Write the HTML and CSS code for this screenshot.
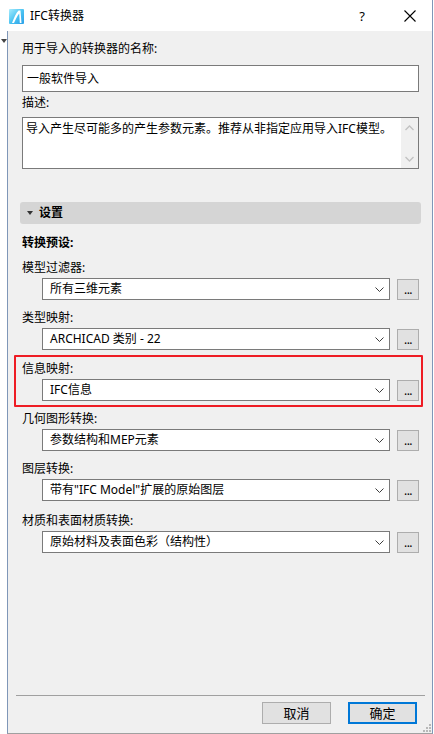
FILE: index.html
```html
<!DOCTYPE html>
<html lang="zh">
<head>
<meta charset="utf-8">
<title>IFC转换器</title>
<link rel="stylesheet" href="styles.css">
</head>
<body>
<div class="window">
  <div class="titlebar">
    <svg class="app-icon" width="15" height="15" viewBox="0 0 15 15">
      <defs>
        <linearGradient id="g" x1="0" y1="0" x2="1" y2="1">
          <stop offset="0" stop-color="#a8ecfd"/>
          <stop offset="0.5" stop-color="#4cc4f2"/>
          <stop offset="1" stop-color="#2a9fe8"/>
        </linearGradient>
      </defs>
      <rect x="0" y="0" width="15" height="15" rx="1" fill="url(#g)"/>
      <path d="M3 14 C5 9 7 4 9.5 1.5 L11.5 1.5 L12.5 14 L10.8 14 L10.2 4.5 C8.2 7 6.5 10.5 5 14 Z" fill="#ffffff"/>
    </svg>
    <span class="title">IFC转换器</span>
    <span class="help">?</span>
    <svg class="close" width="12" height="12" viewBox="0 0 12 12">
      <path d="M0.5 0.5 L11.5 11.5 M11.5 0.5 L0.5 11.5" stroke="#000" stroke-width="1.1" fill="none"/>
    </svg>
  </div>
  <div class="main">
    <div class="gutter"><span class="gutter-arrow"></span></div>
    <div class="panel">
      <div class="label first">用于导入的转换器的名称:</div>
      <div class="input">一般软件导入</div>
      <div class="label desc-label">描述:</div>
      <div class="textarea">
        <div class="textarea-text">导入产生尽可能多的产生参数元素。推荐从非指定应用导入IFC模型。</div>
        <div class="scrollbar">
          <svg width="9" height="6" viewBox="0 0 9 6"><polyline points="0.5,5 4.5,1 8.5,5" stroke="#c2c2c2" stroke-width="1.3" fill="none"/></svg>
          <svg width="9" height="6" viewBox="0 0 9 6"><polyline points="0.5,1 4.5,5 8.5,1" stroke="#c2c2c2" stroke-width="1.3" fill="none"/></svg>
        </div>
      </div>

      <div class="section-head"><span class="tri"></span><span class="section-title">设置</span></div>
      <div class="label bold preset">转换预设:</div>

      <div class="row r1">
        <div class="label">模型过滤器:</div>
        <div class="combo-line">
          <div class="combo"><span>所有三维元素</span><svg class="chev" width="9" height="5" viewBox="0 0 9 5"><polyline points="0.5,0.5 4.5,4.5 8.5,0.5" stroke="#3c3c3c" stroke-width="1" fill="none"/></svg></div>
          <div class="dots">...</div>
        </div>
      </div>
      <div class="row r2">
        <div class="label">类型映射:</div>
        <div class="combo-line">
          <div class="combo"><span>ARCHICAD 类别 - 22</span><svg class="chev" width="9" height="5" viewBox="0 0 9 5"><polyline points="0.5,0.5 4.5,4.5 8.5,0.5" stroke="#3c3c3c" stroke-width="1" fill="none"/></svg></div>
          <div class="dots">...</div>
        </div>
      </div>
      <div class="row r3">
        <div class="label">信息映射:</div>
        <div class="combo-line">
          <div class="combo"><span>IFC信息</span><svg class="chev" width="9" height="5" viewBox="0 0 9 5"><polyline points="0.5,0.5 4.5,4.5 8.5,0.5" stroke="#3c3c3c" stroke-width="1" fill="none"/></svg></div>
          <div class="dots">...</div>
        </div>
      </div>
      <div class="row r4">
        <div class="label">几何图形转换:</div>
        <div class="combo-line">
          <div class="combo"><span>参数结构和MEP元素</span><svg class="chev" width="9" height="5" viewBox="0 0 9 5"><polyline points="0.5,0.5 4.5,4.5 8.5,0.5" stroke="#3c3c3c" stroke-width="1" fill="none"/></svg></div>
          <div class="dots">...</div>
        </div>
      </div>
      <div class="row r5">
        <div class="label">图层转换:</div>
        <div class="combo-line">
          <div class="combo"><span>带有"IFC Model"扩展的原始图层</span><svg class="chev" width="9" height="5" viewBox="0 0 9 5"><polyline points="0.5,0.5 4.5,4.5 8.5,0.5" stroke="#3c3c3c" stroke-width="1" fill="none"/></svg></div>
          <div class="dots">...</div>
        </div>
      </div>
      <div class="row r6">
        <div class="label">材质和表面材质转换:</div>
        <div class="combo-line">
          <div class="combo"><span>原始材料及表面色彩（结构性）</span><svg class="chev" width="9" height="5" viewBox="0 0 9 5"><polyline points="0.5,0.5 4.5,4.5 8.5,0.5" stroke="#3c3c3c" stroke-width="1" fill="none"/></svg></div>
          <div class="dots">...</div>
        </div>
      </div>

      <div class="footer">
        <div class="separator"></div>
        <div class="buttons">
          <div class="btn">取消</div>
          <div class="btn default">确定</div>
        </div>
      </div>
      <svg class="grip" width="9" height="9" viewBox="0 0 9 9">
        <rect x="7" y="1" width="2" height="2" fill="#b8b8b8"/>
        <rect x="4" y="4" width="2" height="2" fill="#b8b8b8"/>
        <rect x="7" y="4" width="2" height="2" fill="#b8b8b8"/>
        <rect x="1" y="7" width="2" height="2" fill="#b8b8b8"/>
        <rect x="4" y="7" width="2" height="2" fill="#b8b8b8"/>
        <rect x="7" y="7" width="2" height="2" fill="#b8b8b8"/>
      </svg>
      <div class="highlight"></div>
    </div>
  </div>
</div>
</body>
</html>
```

FILE: styles.css
```css
* { box-sizing: border-box; }
html, body { margin: 0; padding: 0; }
body {
  font-family: "Noto Sans", "Noto Sans CJK SC", sans-serif;
  font-size: 12px;
  color: #000;
  background: #fff;
}
.window {
  width: 434px;
  height: 734px;
  background: #fff;
  display: flex;
  flex-direction: column;
  border-right: 1px solid #fff;
  position: relative;
}
.titlebar {
  height: 31px;
  display: flex;
  align-items: center;
  background: #fff;
  border-right: 1px solid #7f97b8;
}
.app-icon { margin-left: 9px; margin-top: 2px; }
.title { margin-left: 6px; font-size: 12px; line-height: 16px; margin-top: 1px; }
.help { margin-left: auto; font-size: 13px; line-height: 16px; margin-right: 39px; }
.close { margin-right: 16px; }
.main {
  flex: 1;
  display: flex;
}
.gutter {
  width: 7px;
  background: #fff;
  position: relative;
}
.gutter-arrow {
  position: absolute;
  left: 1px;
  top: 8px;
  width: 0; height: 0;
  border-left: 3px solid transparent;
  border-right: 3px solid transparent;
  border-top: 4px solid #444;
}
.panel {
  width: 426px;
  background: #f0f0f0;
  border-left: 1px solid #7f97b8;
  border-right: 1px solid #7f97b8;
  border-bottom: 1px solid #a0a0a0;
  padding-left: 14px;
  display: flex;
  flex-direction: column;
  position: relative;
}
.label { line-height: 16px; height: 16px; white-space: nowrap; }
.label.first { margin-top: 10px; }
.bold { font-weight: bold; }
.input {
  margin-top: 8px;
  width: 397px;
  height: 27px;
  border: 1px solid #7a7a7a;
  background: #fff;
  padding-left: 4px;
  line-height: 25px;
  font-size: 12px;
}
.desc-label { margin-top: 3px; }
.textarea {
  margin-top: 6px;
  width: 397px;
  height: 52px;
  border: 1px solid #7a7a7a;
  background: #fff;
  display: flex;
}
.textarea-text {
  flex: 1;
  padding: 3px 0 0 3px;
  line-height: 16px;
  white-space: nowrap;
  overflow: hidden;
}
.scrollbar {
  width: 17px;
  background: #f0f0f0;
  display: flex;
  flex-direction: column;
  align-items: center;
  justify-content: space-between;
  padding: 7px 0 6px;
}
.section-head {
  margin-top: 33px;
  margin-left: -2px;
  width: 401px;
  height: 22px;
  background: #d5d5d5;
  border-radius: 3px;
  display: flex;
  align-items: center;
}
.tri {
  margin-left: 7px;
  width: 0; height: 0;
  border-left: 3.5px solid transparent;
  border-right: 3.5px solid transparent;
  border-top: 4px solid #333;
}
.section-title { margin-left: 6px; font-weight: bold; line-height: 16px; }
.preset { margin-top: 11px; }
.row { display: flex; flex-direction: column; }
.r1 { margin-top: 9px; }
.r2 { margin-top: 10px; }
.r3 { margin-top: 11px; }
.r4 { margin-top: 10px; }
.r5 { margin-top: 10px; }
.r6 { margin-top: 12px; }
.combo-line {
  margin-top: 2px;
  margin-left: 20px;
  display: flex;
  align-items: center;
}
.combo {
  width: 348px;
  height: 22px;
  border: 1px solid #7a7a7a;
  background: #fff;
  display: flex;
  align-items: center;
  padding-left: 7px;
  padding-right: 4px;
  line-height: 16px;
  white-space: nowrap;
}
.combo span { flex: 1; }
.chev { margin-right: 1px; }
.dots {
  margin-left: 7px;
  width: 22px;
  height: 21px;
  border: 1px solid #adadad;
  background: #e1e1e1;
  text-align: center;
  line-height: 19px;
  font-size: 12px;
  letter-spacing: -0.5px;
}
.footer {
  margin-top: auto;
  margin-left: -6px;
  margin-bottom: 9px;
}
.separator {
  width: 409px;
  height: 1px;
  background: #a0a0a0;
}
.buttons {
  margin-top: 6px;
  display: flex;
  justify-content: flex-end;
  gap: 17px;
  padding-right: 8px;
  width: 409px;
}
.btn {
  width: 69px;
  height: 22px;
  border: 1px solid #adadad;
  background: #e1e1e1;
  text-align: center;
  line-height: 20px;
  font-size: 13px;
}
.btn.default {
  border: 2px solid #0078d7;
  line-height: 18px;
}
.grip { position: absolute; right: 1px; bottom: 1px; }
.highlight {
  position: absolute;
  left: 6px;
  top: 324px;
  width: 409px;
  height: 52px;
  border: 2px solid #ee1c24;
  border-radius: 1px;
  pointer-events: none;
}
```
